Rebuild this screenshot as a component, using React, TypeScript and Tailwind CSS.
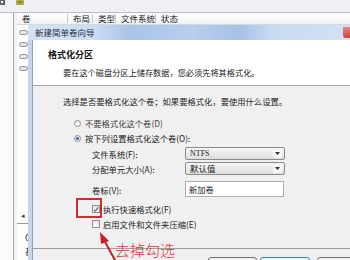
import { ReactNode } from "react";

const cjk = "font-['Noto_Sans_CJK_SC','Noto_Sans',sans-serif]";

function DiskIcon() {
  return (
    <svg width="9" height="5" viewBox="0 0 9 5">
      <rect x="0.5" y="0.5" width="8" height="4" rx="2" fill="#e4e6ea" stroke="#8d9096" />
    </svg>
  );
}

function Combo({ children, mono }: { children: ReactNode; mono?: boolean }) {
  return (
    <div className="flex h-[13px] w-[100px] items-center justify-between rounded-[2px] border border-[#8a8a8a] bg-[linear-gradient(#f6f6f6,#dedede)] pl-[4px] pr-[2px]">
      <span
        className={
          mono
            ? "font-['Liberation_Serif',serif] text-[8px] leading-none text-[#222]"
            : "text-[8.5px] leading-none text-[#222]"
        }
      >
        {children}
      </span>
      <span className="flex h-[9px] w-[9px] items-center justify-center rounded-[2px] bg-[#f8f8f8]">
        <svg width="5" height="3" viewBox="0 0 5 3">
          <path d="M0 0h5L2.5 3z" fill="#333" />
        </svg>
      </span>
    </div>
  );
}

function Radio({ checked }: { checked?: boolean }) {
  return (
    <span className="flex h-[7px] w-[7px] items-center justify-center rounded-full border border-[#8c8c8c] bg-[linear-gradient(#e9e9e9,#ffffff)]">
      {checked && <span className="h-[3px] w-[3px] rounded-full bg-[#2d5c9e]" />}
    </span>
  );
}

function Check({ checked }: { checked?: boolean }) {
  return (
    <span className="flex h-[8px] w-[8px] items-center justify-center border border-[#8e8f8f] bg-[linear-gradient(#e6e6e6,#fbfbfb)]">
      {checked && (
        <svg width="7" height="7" viewBox="0 0 7 7">
          <path d="M1 3.8l1.7 1.8L6 1" fill="none" stroke="#4a5a78" strokeWidth="1.2" />
        </svg>
      )}
    </span>
  );
}

export default function App() {
  return (
    <div className={`relative h-[260px] w-[350px] overflow-hidden bg-white text-[#222] ${cjk}`}>
      {/* window behind the wizard */}
      <div className="flex h-full flex-col">
        <div className="flex h-[13px] items-start gap-[10px] border-b border-[#b8bccb] bg-[#eef0f6]">
          <svg width="6" height="6" viewBox="0 0 6 6">
            <rect x="0" y="0" width="5" height="5" fill="#5a6270" />
            <rect x="1" y="1" width="2" height="2" fill="#fff" />
          </svg>
          <svg width="8" height="6" viewBox="0 0 8 6">
            <rect x="0" y="0" width="8" height="5" rx="1" fill="#b9a640" />
            <rect x="2" y="1" width="4" height="2" fill="#6f8f3a" />
          </svg>
        </div>
        <div className="flex flex-1">
          <div className="w-[14px] border-r border-[#a6a6a6] bg-[#fbfbfb]" />
          <div className="w-[3px] bg-[#f2f2f2]" />
          <div className="flex flex-1 flex-col bg-white">
            <div className="flex h-[12px] items-center border-b border-[#d8d8d8] bg-[linear-gradient(#ffffff,#f1f2f4)] text-[8.5px] leading-none">
              <div className="w-[50px] pl-[5px]">卷</div>
              <div className="w-[25px] border-l border-[#c8c8c8] pl-[5px]">布局</div>
              <div className="w-[23px] border-l border-[#c8c8c8] pl-[5px]">类型</div>
              <div className="w-[40px] border-l border-[#c8c8c8] pl-[5px]">文件系统</div>
              <div className="border-l border-[#c8c8c8] pl-[5px]">状态</div>
            </div>
            <div className="flex flex-col gap-[7px] pl-[2px] pt-[5px]">
              <DiskIcon />
              <DiskIcon />
              <DiskIcon />
              <DiskIcon />
            </div>
            <div className="flex-1" />
            <div className="flex h-[17px] items-center border-b border-[#9a9a9a] pl-[4px] text-[7px] text-[#333]">
              ◂
            </div>
            <div className="h-[36px] pl-[8px] pt-[6px] text-[8.5px] leading-[14px]">
              <div>C</div>
              <div>基</div>
            </div>
          </div>
        </div>
      </div>

      {/* wizard dialog */}
      <div className="absolute left-[28px] top-[25px] flex h-[260px] w-[340px] flex-col">
        <div className="flex h-[15px] items-center bg-[linear-gradient(90deg,#d3e3f6_0%,#cadcf3_20%,#a9c4e7_30%,#b8cfee_48%,#a6c1e5_62%,#c9dbf2_72%,#d3e3f6_100%)] pl-[7px]">
          <span className="text-[8.5px] leading-none text-[#1d2a3a]">新建简单卷向导</span>
          <span className="ml-auto h-[11px] w-[25px] rounded-bl-[3px] bg-[linear-gradient(#e08a80,#c4463a)]" />
        </div>
        <div className="flex flex-1">
          <div className="w-[5px] border-r border-[#8aa3c2] bg-[#c5d6ea]" />
          <div className="flex flex-1 flex-col">
            <div className="h-[46px] border-b border-[#a6a6a6] bg-white pl-[15px] pt-[9px]">
              <div className="text-[9px] font-bold leading-[12px] text-[#111]">格式化分区</div>
              <div className="mt-[5px] pl-[15px] text-[8.2px] leading-[12px]">
                要在这个磁盘分区上储存数据，您必须先将其格式化。
              </div>
            </div>
            <div className="flex flex-1 flex-col bg-[#f0f0f0]">
              <div className="pl-[30px] pt-[9px] text-[8.3px] leading-[12px]">
                <div>选择是否要格式化这个卷；如果要格式化，要使用什么设置。</div>
                <div className="mt-[10px] flex items-center gap-[4px] pl-[11px]">
                  <Radio />
                  <span className="text-[#444]">不要格式化这个卷(D)</span>
                </div>
                <div className="mt-[3px] flex items-center gap-[4px] pl-[11px]">
                  <Radio checked />
                  <span>按下列设置格式化这个卷(O):</span>
                </div>
                <div className="mt-[3px] grid grid-cols-[93px_100px] items-center gap-y-[2px] pl-[29px]">
                  <span>文件系统(F):</span>
                  <Combo mono>NTFS</Combo>
                  <span>分配单元大小(A):</span>
                  <Combo>默认值</Combo>
                  <span className="mt-[6px]">卷标(V):</span>
                  <div className="mt-[4px] flex h-[16px] w-[99px] items-center border border-[#abadb3] bg-white pl-[3px]">
                    新加卷
                  </div>
                </div>
                <div className="mt-[6px] flex items-center gap-[3px] pl-[29px]">
                  <Check checked />
                  <span>执行快速格式化(F)</span>
                </div>
                <div className="mt-[3px] flex items-center gap-[3px] pl-[29px]">
                  <Check />
                  <span>启用文件和文件夹压缩(E)</span>
                </div>
              </div>
              <div className="mt-[18px] border-t border-[#a0a0a0] pt-[8px]">
                <div className="flex gap-[3px] pl-[175px] text-[8.3px] leading-none">
                  <div className="flex h-[22px] w-[49px] justify-center rounded-[3px] border border-[#707070] bg-[linear-gradient(#f2f2f2,#dcdcdc)] pt-[8px]">
                    &lt; 上一步(B)
                  </div>
                  <div className="flex h-[22px] w-[50px] justify-center rounded-[3px] border border-[#3c7fb1] bg-[linear-gradient(#eaf6fd,#bee6fd)] pt-[8px]">
                    下一步(N) &gt;
                  </div>
                  <div className="ml-[4px] flex h-[22px] w-[50px] justify-center rounded-[3px] border border-[#707070] bg-[linear-gradient(#f2f2f2,#dcdcdc)] pt-[8px]">
                    取消
                  </div>
                </div>
              </div>
            </div>
          </div>
        </div>
      </div>

      {/* annotation */}
      <div className="absolute left-[76px] top-[198px] h-[20px] w-[26px] border-2 border-[#d22b2b]" />
      <svg className="absolute left-0 top-0" width="350" height="260" viewBox="0 0 350 260">
        <line x1="116" y1="262" x2="104" y2="240" stroke="#c8202a" strokeWidth="2" />
        <path d="M100 232 L109 241 L101 244 Z" fill="#c8202a" />
      </svg>
      <div className="absolute left-[115px] top-[241px] text-[15px] font-light leading-[18px] text-[#d8343a]">
        去掉勾选
      </div>
    </div>
  );
}
